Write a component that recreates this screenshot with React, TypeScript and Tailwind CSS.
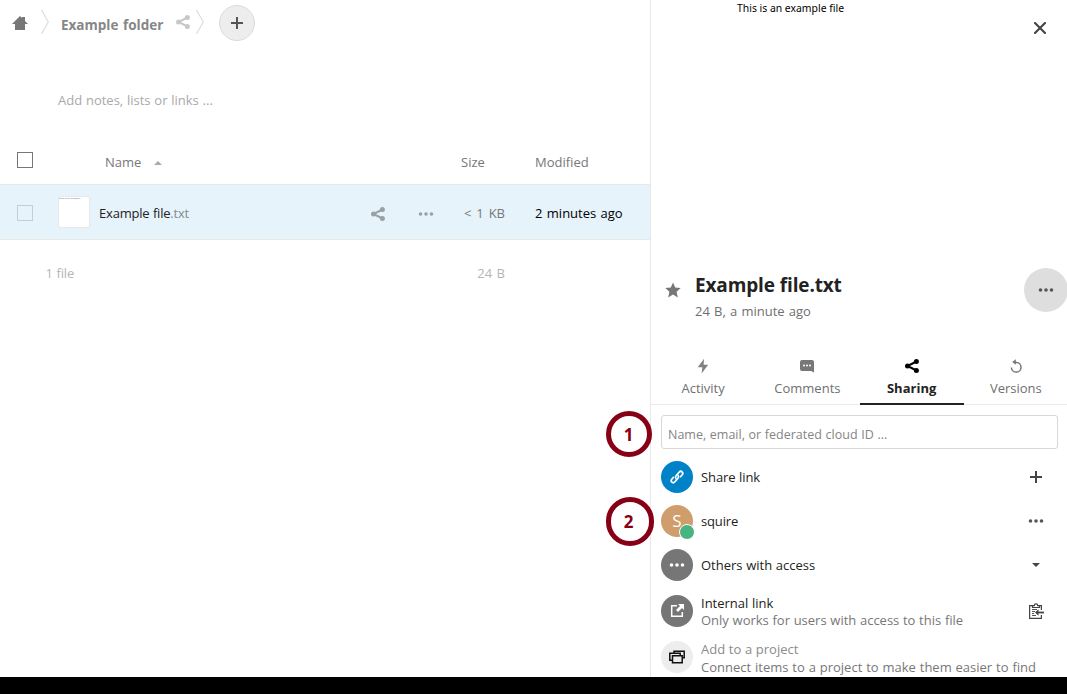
import React from 'react';

type IconProps = { className?: string };

const Share = ({ className = '' }: IconProps) => (
  <svg viewBox="0 0 16 16" className={`h-4 w-4 shrink-0 ${className}`} fill="currentColor">
    <path d="M12.5 3.5 3.5 8l9 4.5" fill="none" stroke="currentColor" strokeWidth="2" />
    <circle cx="3.5" cy="8" r="2.5" />
    <circle cx="12.4" cy="3.5" r="2.5" />
    <circle cx="12.4" cy="12.5" r="2.5" />
  </svg>
);

const More = ({ className = '' }: IconProps) => (
  <svg viewBox="0 0 16 16" className={`h-4 w-4 shrink-0 ${className}`} fill="currentColor">
    <circle cx="2.5" cy="8" r="1.8" />
    <circle cx="8" cy="8" r="1.8" />
    <circle cx="13.5" cy="8" r="1.8" />
  </svg>
);

const Plus = ({ className = '' }: IconProps) => (
  <svg viewBox="0 0 16 16" className={`h-4 w-4 shrink-0 ${className}`} fill="currentColor">
    <path d="M7 2h2v5h5v2H9v5H7V9H2V7h5z" />
  </svg>
);

const Home = ({ className = '' }: IconProps) => (
  <svg viewBox="0 0 16 16" className={`h-4 w-4 shrink-0 ${className}`} fill="currentColor">
    <path d="m8 1-8 8h3v6h10V9h3l-3-3V2h-3v1z" />
  </svg>
);

const Crumb = ({ className = '' }: IconProps) => (
  <svg viewBox="0 0 8 24" className={`h-6 w-2 shrink-0 ${className}`} fill="none" stroke="#dadada" strokeWidth="1.1">
    <path d="M.5 0 7.3 12 .5 24" />
  </svg>
);

const Star = () => (
  <svg viewBox="0 0 16 16" className="h-4 w-4 shrink-0" fill="#767676">
    <path d="m8 .5 2.200 5 5.500.6-4.100 3.700 1.200 5.600L8 12.500l-4.800 2.900 1.200-5.600L.3 6.100l5.500-.6z" />
  </svg>
);

const Bolt = () => (
  <svg viewBox="0 0 16 16" className="h-4 w-4" fill="#808080">
    <path d="M9 .8 2.800 9.200h4.600L6.600 15.400l6.600-8.600H8.600z" />
  </svg>
);

const Comment = () => (
  <svg viewBox="0 0 16 16" className="h-4 w-4" fill="#777">
    <path d="M3 2h10a2 2 0 0 1 2 2v10.500L12.200 13H3a2 2 0 0 1-2-2V4a2 2 0 0 1 2-2z" />
    <g fill="#fff">
      <circle cx="5" cy="7.500" r="1" />
      <circle cx="8" cy="7.500" r="1" />
      <circle cx="11" cy="7.500" r="1" />
    </g>
  </svg>
);

const History = () => (
  <svg viewBox="0 0 16 16" className="h-4 w-4" fill="none" stroke="#777" strokeWidth="1.500">
    <path d="M6 4.500h2.500a4.800 4.800 0 1 1-5.100 5" />
    <path d="M7.800 1.200v5.600L4.200 4z" fill="#777" stroke="none" />
  </svg>
);

const LinkIcon = () => (
  <svg viewBox="0 0 16 16" className="h-4 w-4" fill="none" stroke="#fff" strokeWidth="1.700" strokeLinecap="round">
    <path d="M7 9.800C6 8.600 6.400 7.500 7.200 6.500l2.900-3.300c.9-1 2.200-1.100 3-.4s.9 1.900.1 2.900L11.500 7.700" />
    <path d="M9 6.200c1 1.200.6 2.300-.2 3.300l-2.900 3.300c-.9 1-2.200 1.100-3 .4s-.9-1.900-.1-2.900L4.500 8.300" />
  </svg>
);

const External = () => (
  <svg viewBox="0 0 16 16" className="h-4 w-4">
    <path d="M8 2.700H2.700v10.600h10.600V9" fill="none" stroke="#fff" strokeWidth="1.500" />
    <path d="M9 1h6v6l-2-2-4 4L7 7l4-4z" fill="#fff" />
  </svg>
);

const Projects = () => (
  <svg viewBox="0 0 16 16" className="h-4 w-4" fill="#ededed" stroke="#111" strokeWidth="1.500">
    <path d="M5 2.200h10.200v6.600H5z" />
    <path d="M.8 4.200h10.400v7H.8z" />
    <path d="M3.500 6.700h9.700v7H3.500z" />
  </svg>
);

const Clipboard = () => (
  <svg viewBox="0 0 16 16" className="h-4 w-4" fill="none" stroke="#444" strokeWidth="1.200">
    <path d="M13.400 7V2.600H1.600v12.800h11.800V12" />
    <path d="M4.500 4.500V2.600h1.800a1.700 1.700 0 0 1 3.400 0h1.800v1.900z" fill="#fff" />
    <path d="M4 6.500h5M4 8.500h3M4 10.500h2M4 12.500h4" strokeWidth=".9" />
    <path d="M16 9.500H9" strokeWidth="1.800" />
    <path d="M10.500 6.300v6.400L7 9.500z" fill="#444" stroke="none" />
  </svg>
);

const Tab = ({ icon, label, active = false }: { icon: React.ReactNode; label: string; active?: boolean }) => (
  <div className={`flex h-[50px] flex-1 flex-col items-center pt-[3px] ${active ? 'border-b-2 border-[#222] font-bold text-[#222]' : 'text-[#6f6f6f]'}`}>
    {icon}
    <span className="mt-[4px] leading-5">{label}</span>
  </div>
);

const Row = ({ avatar, children, action, className = '' }: { avatar: React.ReactNode; children: React.ReactNode; action?: React.ReactNode; className?: string }) => (
  <div className={`flex shrink-0 items-center pl-[10px] pr-[23px] ${className}`}>
    {avatar}
    <div className="ml-2 flex-1 text-[#222]">{children}</div>
    {action}
  </div>
);

const avatarBase = 'relative flex h-8 w-8 shrink-0 items-center justify-center rounded-full';

export default function App() {
  return (
    <div className="relative flex h-[694px] w-[1067px] flex-col overflow-hidden whitespace-nowrap bg-white font-['Open_Sans','Noto_Sans',sans-serif] text-[13px] text-[#222] [word-spacing:0.3px]">
      <div className="flex h-[677px] overflow-hidden">
        <main className="w-[650px] shrink-0">
          <header className="flex h-[46px] items-center pl-3">
            <Home className="-mt-[1px] text-[#777]" />
            <Crumb className="ml-[13px] -mt-[2px]" />
            <span className="ml-[12px] mt-[4px] w-[102px] text-[13.500px] font-bold text-[#868686] [word-spacing:1px]">Example folder</span>
            <Share className="ml-[12px] -mt-[2px] text-[#c8c8c8]" />
            <Crumb className="ml-[5px] -mt-[2px]" />
            <button className="ml-[15px] flex h-9 w-9 items-center justify-center rounded-full border border-[#dbdbdb] bg-[#ededed] text-[#555]">
              <Plus />
            </button>
          </header>
          <div className="mt-[44px] pl-[58px] leading-5 text-[#a9a9a9] [word-spacing:0.4px]">Add notes, lists or links ...</div>
          <div className="mt-[30px] flex h-[44px] items-start text-[#777]">
            <span className="ml-[17px] mt-[12px] h-4 w-4 border border-[#777]" />
            <span className="ml-[72px] mt-[12px] leading-5">Name</span>
            <svg viewBox="0 0 8 4" className="ml-[13px] mt-[21px] h-1 w-2" fill="#aaa"><path d="M4 0 8 4H0z" /></svg>
            <span className="ml-auto mt-[12px] w-[74px] leading-5">Size</span>
            <span className="mt-[12px] w-[115px] leading-5">Modified</span>
          </div>
          <div className="flex h-[56px] items-center border-y border-[#e8e8e8] bg-[#e6f3fa]">
            <span className="ml-[17px] mt-[2px] h-4 w-4 border border-[#c3ced4]" />
            <span className="ml-[25px] h-8 w-8 rounded-[3px] border border-[#e6e8ea] bg-white text-[2.500px] leading-[3px] text-[#666] [word-spacing:0px]">This is an example</span>
            <span className="ml-[9px] mt-[3px] tracking-[-0.2px]">Example file<span className="text-[#868b8e]">.txt</span></span>
            <Share className="ml-auto mt-[3px] text-[#98a1a5]" />
            <More className="ml-8 mt-[3px] text-[#98a1a5]" />
            <span className="mt-[3px] w-[71px] text-right text-[#777] [word-spacing:1.500px]">&lt; 1 KB</span>
            <span className="ml-[30px] mt-[3px] w-[115px] text-black [word-spacing:1px]">2 minutes ago</span>
          </div>
          <div className="mt-[23px] flex leading-5 text-[#b5b5b5]">
            <span className="ml-[45.500px] tracking-[-0.1px]">1 file</span>
            <span className="ml-auto mr-[145px] [word-spacing:1px]">24 B</span>
          </div>
        </main>

        <aside className="flex w-[417px] shrink-0 flex-col border-l border-[#e8e8e8]">
          <div className="flex h-[268px] shrink-0 items-start">
            <span className="ml-[86px] font-['Noto_Sans'] text-[10.400px] leading-4 text-black [word-spacing:0px]">This is an example file</span>
            <svg viewBox="0 0 12 12" className="ml-auto mr-[21px] mt-[22px] h-3 w-3" stroke="#444" strokeWidth="2.100" strokeLinecap="round"><path d="m1 1 10 10M11 1 1 11" /></svg>
          </div>
          <div className="flex h-[87px] shrink-0">
            <div className="ml-[14px] mt-[14px]"><Star /></div>
            <div className="ml-[14px]">
              <h1 className="mt-[4px] text-[19px] font-bold leading-[26px] tracking-[-0.150px]">Example file.txt</h1>
              <p className="mt-[3px] leading-5 text-[#6f6f6f] [word-spacing:0.800px]">24 B, a minute ago</p>
            </div>
            <button className="-mr-[1px] ml-auto flex h-11 w-11 items-center justify-center rounded-full bg-[#dedede] text-[#555]"><More /></button>
          </div>
          <nav className="-mr-[1px] flex h-[50px] shrink-0 border-b border-[#ebebeb]">
            <Tab icon={<Bolt />} label="Activity" />
            <Tab icon={<Comment />} label="Comments" />
            <Tab icon={<Share className="text-black" />} label="Sharing" active />
            <Tab icon={<History />} label="Versions" />
          </nav>
          <input className="ml-[10px] mr-[9px] mt-[10px] h-[34px] shrink-0 rounded-[3px] border border-[#d8d8d8] px-[6px] pt-[4px] text-[12.500px] [word-spacing:0.4px] placeholder:text-[#858585]" placeholder="Name, email, or federated cloud ID ..." />
          <Row className="mt-[6px] h-[44px]" action={<Plus className="text-[#444]" />}
            avatar={<span className={`${avatarBase} bg-[#0082c9]`}><LinkIcon /></span>}><div className="mt-[1px] tracking-[-0.1px]">Share link</div></Row>
          <Row className="h-[44px]" action={<More className="text-[#555]" />}
            avatar={<span className={`${avatarBase} bg-[#d09e6d] text-[17px] text-white`}>S<i className="absolute -right-[2px] -bottom-[3px] h-4 w-4 rounded-full border border-white bg-[#49b382]" /></span>}><div className="mt-[1px] tracking-[-0.15px]">squire</div></Row>
          <Row className="h-[44px]" action={<svg viewBox="0 0 8 4" className="mr-1 h-1 w-2" fill="#444"><path d="M0 0h8L4 4z" /></svg>}
            avatar={<span className={`${avatarBase} bg-[#767676] text-white`}><More /></span>}><div className="mt-[1px]">Others with access</div></Row>
          <Row className="mt-[1px] h-[46px]" action={<Clipboard />}
            avatar={<span className={`${avatarBase} bg-[#767676]`}><External /></span>}>
            <div className="mt-[2px] leading-[17px]">Internal link</div>
            <div className="leading-[17px] text-[#777]">Only works for users with access to this file</div>
          </Row>
          <Row className="h-[46px]"
            avatar={<span className={`${avatarBase} bg-[#ededed]`}><Projects /></span>}>
            <div className="mt-[2px] leading-[17px] text-[#8b8b8b]">Add to a project</div>
            <div className="leading-[18px] text-[#777] [word-spacing:0.5px]">Connect items to a project to make them easier to find</div>
          </Row>
        </aside>
      </div>
      <footer className="h-[17px] shrink-0 bg-black" />
      <div className="absolute left-[606px] top-[411px] flex h-[46px] w-[46px] items-center justify-center rounded-full border-[5px] border-[#870016] pr-[1px] pt-[1px] text-[17px] font-bold text-[#870016]">1</div>
      <div className="absolute left-[606px] top-[497px] flex h-[49px] w-[48px] items-center justify-center rounded-full border-[5px] border-[#870016] pr-[3px] text-[17px] font-bold text-[#870016]">2</div>
    </div>
  );
}
